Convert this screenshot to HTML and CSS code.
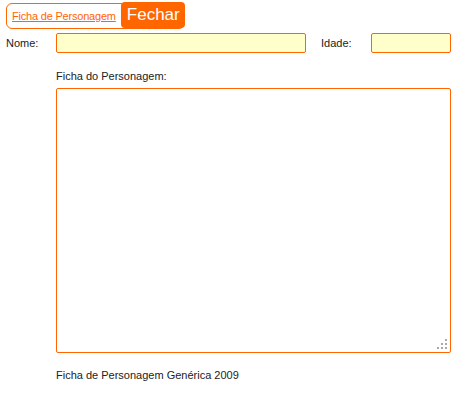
FILE: index.html
```html
<!DOCTYPE html>
<html lang="pt">
  <head>
    <meta charset="utf-8" />
    <title>Ficha de Personagem</title>
    <link rel="stylesheet" href="styles.css">
  </head>
  <body>
    <div class="tabs">
      <a class="tab-link" href="#">Ficha de Personagem</a>
      <span class="close">Fechar</span>
    </div>
    <form class="sheet">
      <div class="row">
        <label class="lbl name-lbl">Nome:</label>
        <input class="field name" type="text">
        <label class="lbl age-lbl">Idade:</label>
        <input class="field age" type="text">
      </div>
      <div class="block">
        <label class="lbl">Ficha do Personagem:</label>
        <div class="notes-wrap">
          <textarea class="notes"></textarea>
          <svg class="grip" width="10" height="10" viewBox="0 0 10 10">
            <rect x="8" y="0" width="2" height="2" fill="#aaa"/>
            <rect x="4" y="4" width="2" height="2" fill="#aaa"/>
            <rect x="8" y="4" width="2" height="2" fill="#aaa"/>
            <rect x="0" y="8" width="2" height="2" fill="#aaa"/>
            <rect x="4" y="8" width="2" height="2" fill="#aaa"/>
            <rect x="8" y="8" width="2" height="2" fill="#aaa"/>
          </svg>
        </div>
        <p class="footer">Ficha de Personagem Genérica 2009</p>
      </div>
    </form>
  </body>
</html>
```
FILE: styles.css
```css
body {
  margin: 0;
  padding: 2px 6px;
  font-family: "Liberation Sans", Arial, sans-serif;
  font-size: 11px;
  color: #222;
  background: #fff;
}

.tabs {
  display: inline-flex;
  align-items: center;
  border: 1px solid #ff6600;
  border-radius: 6px;
  height: 24px;
  margin-top: 1px;
}

.tab-link {
  color: #ff6600;
  padding: 0 5px;
  font-size: 11px;
  letter-spacing: -0.2px;
}

.close {
  background: #ff6600;
  color: #fff;
  font-size: 17px;
  line-height: 26px;
  height: 26px;
  padding: 0 5px 0 6px;
  border-radius: 4px;
  margin: -2px -1px 0 0;
}

.sheet {
  margin: 0;
}

.row {
  display: flex;
  align-items: center;
  margin-top: 4px;
}

.lbl {
  display: block;
}

.name-lbl {
  width: 50px;
}

.age-lbl {
  margin-left: 15px;
  width: 50px;
}

.field {
  box-sizing: border-box;
  height: 20px;
  border: 1px solid #ff6600;
  border-radius: 2px;
  background: #ffffcc;
  padding: 0 3px;
  margin: 0;
}

.name {
  width: 250px;
}

.age {
  width: 80px;
}

.block {
  padding-left: 50px;
  margin-top: 17px;
}

.notes-wrap {
  position: relative;
  width: 395px;
  margin-top: 6px;
}

.notes {
  display: block;
  box-sizing: border-box;
  width: 395px;
  height: 265px;
  margin: 0;
  border: 1px solid #ff6600;
  border-radius: 2px;
  background: #fff;
  resize: none;
}

.grip {
  position: absolute;
  right: 4px;
  bottom: 4px;
}

.footer {
  margin: 16px 0 0;
}
```
